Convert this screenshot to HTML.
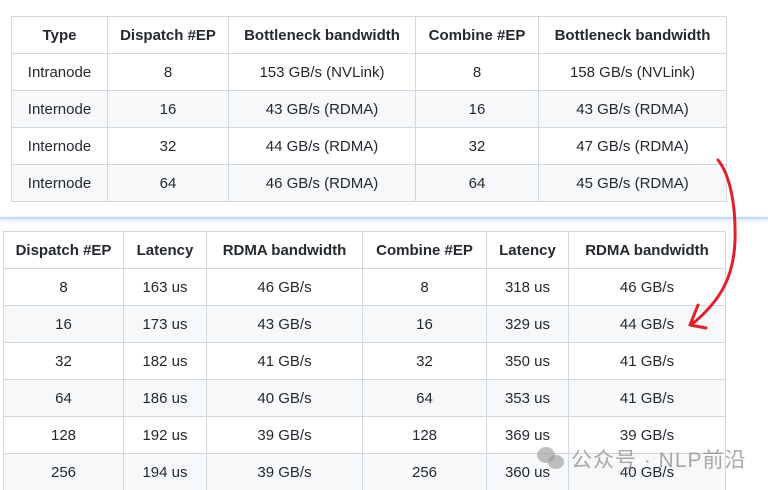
<!DOCTYPE html>
<html><head><meta charset="utf-8"><style>
html,body{margin:0;padding:0;background:#fff;width:768px;height:490px;overflow:hidden;position:relative;font-family:"Liberation Sans","Noto Sans CJK SC",sans-serif;color:#24292f}
table{position:absolute;border-collapse:collapse;table-layout:fixed;font-size:15px}
td,th{border:1px solid #d0d7de;text-align:center;height:36px;padding:0;white-space:nowrap}
th{font-weight:bold}
tr.g td{background:#f6f8fa}
.sep{position:absolute;left:0;top:217px;width:768px;height:2px;background:#c9dcf3;box-shadow:0 1px 3px rgba(120,160,220,0.5)}
.wm{position:absolute;left:571px;top:444px;font-size:21px;color:rgba(140,140,140,0.75);letter-spacing:1px}
</style></head><body>
<table style="left:11px;top:16px;width:715px">
<colgroup><col style="width:96px"><col style="width:121px"><col style="width:187px"><col style="width:123px"><col style="width:188px"></colgroup>
<tr><th>Type</th><th>Dispatch #EP</th><th>Bottleneck bandwidth</th><th>Combine #EP</th><th>Bottleneck bandwidth</th></tr>
<tr><td>Intranode</td><td>8</td><td>153 GB/s (NVLink)</td><td>8</td><td>158 GB/s (NVLink)</td></tr>
<tr class="g"><td>Internode</td><td>16</td><td>43 GB/s (RDMA)</td><td>16</td><td>43 GB/s (RDMA)</td></tr>
<tr><td>Internode</td><td>32</td><td>44 GB/s (RDMA)</td><td>32</td><td>47 GB/s (RDMA)</td></tr>
<tr class="g"><td>Internode</td><td>64</td><td>46 GB/s (RDMA)</td><td>64</td><td>45 GB/s (RDMA)</td></tr>
</table>
<div class="sep"></div>
<table style="left:3px;top:231px;width:722px">
<colgroup><col style="width:120px"><col style="width:83px"><col style="width:156px"><col style="width:124px"><col style="width:82px"><col style="width:157px"></colgroup>
<tr><th>Dispatch #EP</th><th>Latency</th><th>RDMA bandwidth</th><th>Combine #EP</th><th>Latency</th><th>RDMA bandwidth</th></tr>
<tr><td>8</td><td>163 us</td><td>46 GB/s</td><td>8</td><td>318 us</td><td>46 GB/s</td></tr>
<tr class="g"><td>16</td><td>173 us</td><td>43 GB/s</td><td>16</td><td>329 us</td><td>44 GB/s</td></tr>
<tr><td>32</td><td>182 us</td><td>41 GB/s</td><td>32</td><td>350 us</td><td>41 GB/s</td></tr>
<tr class="g"><td>64</td><td>186 us</td><td>40 GB/s</td><td>64</td><td>353 us</td><td>41 GB/s</td></tr>
<tr><td>128</td><td>192 us</td><td>39 GB/s</td><td>128</td><td>369 us</td><td>39 GB/s</td></tr>
<tr class="g"><td>256</td><td>194 us</td><td>39 GB/s</td><td>256</td><td>360 us</td><td>40 GB/s</td></tr>
</table>
<svg style="position:absolute;left:0;top:0" width="768" height="490">
<path d="M718 160 C730 175 736 205 735 240 C734 275 722 300 691 325" fill="none" stroke="#e0202a" stroke-width="3" stroke-linecap="round"/>
<path d="M698 305 L690 325 L706 328" fill="none" stroke="#e0202a" stroke-width="3" stroke-linecap="round" stroke-linejoin="round"/>
<g fill="rgba(150,150,150,0.6)">
<ellipse cx="546" cy="455" rx="9" ry="8"/>
<ellipse cx="556" cy="462" rx="8" ry="7"/>
</g>
</svg>
<div class="wm">公众号 · NLP前沿</div>
</body></html>
